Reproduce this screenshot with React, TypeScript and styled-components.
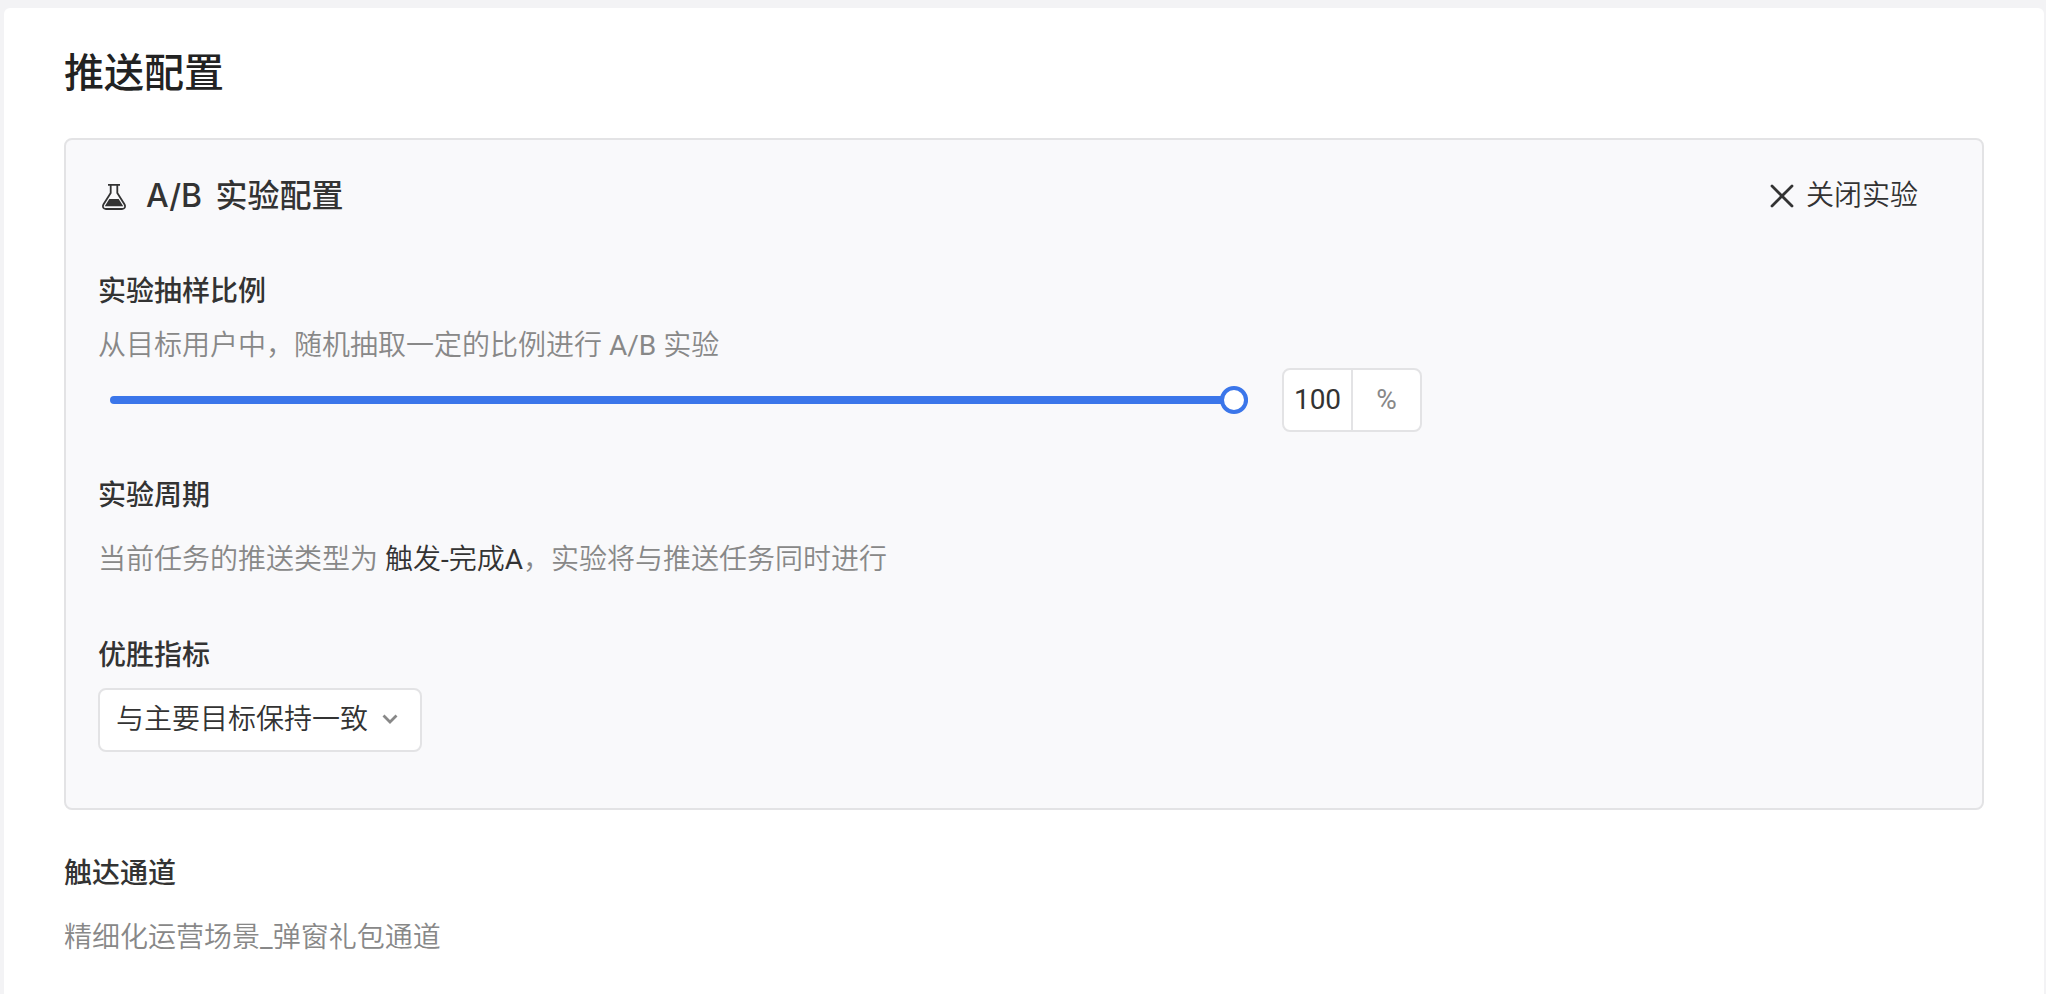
import React, { useState } from "react";
import styled, { createGlobalStyle } from "styled-components";

const GlobalStyle = createGlobalStyle`
  *, *::before, *::after { box-sizing: border-box; }
  body {
    margin: 0;
    background: #f3f3f5;
    color: #333;
    font-family: Roboto, "Noto Sans CJK SC DemiLight", "Noto Sans CJK SC", sans-serif;
    font-size: 28px;
    line-height: 40px;
  }
  button, input, select { font: inherit; color: inherit; }
`;

const Page = styled.main`
  min-height: 100vh;
  padding: 8px 2px 0 4px;
  display: flex;
`;

const Panel = styled.section`
  flex: 1;
  min-width: 0;
  background: #fff;
  border-radius: 6px 6px 0 0;
  padding: 36px 60px;
`;

const Title = styled.h1`
  margin: 0 0 34px;
  font-family: Roboto, "Noto Sans CJK SC", sans-serif;
  font-size: 40px;
  line-height: 60px;
  font-weight: 500;
  color: #222;
`;

const Card = styled.section`
  background: #f9f9fb;
  border: 2px solid #e3e3e5;
  border-radius: 8px;
  padding: 36px 32px 56px;
  margin-bottom: 44px;
`;

const CardHeader = styled.header`
  display: flex;
  align-items: center;
  justify-content: space-between;
  padding-right: 32px;
  margin-bottom: 56px;
`;

const CardTitle = styled.h2`
  display: flex;
  align-items: center;
  gap: 16px;
  margin: 0;
  font-family: Inter, "Noto Sans CJK SC", sans-serif;
  font-size: 32px;
  font-weight: 500;
`;

const TitlePrefix = styled.span`
  margin-right: 5px;
`;

const CloseButton = styled.button`
  display: flex;
  align-items: center;
  gap: 12px;
  padding: 0;
  border: 0;
  background: none;
  cursor: pointer;
`;

const Field = styled.div<{ $gap: number }>`
  margin-top: ${(p) => p.$gap}px;
`;

const labelStyle = `
  display: block;
  margin: 0;
  font-family: Roboto, "Noto Sans CJK SC", sans-serif;
  font-size: 28px;
  font-weight: 500;
`;
const Label = styled.label`${labelStyle}`;
const Heading = styled.h3`${labelStyle}`;

const Description = styled.p<{ $top: number }>`
  margin: ${(p) => p.$top}px 0 0;
  color: #888;
`;

const Highlight = styled.span`
  color: #333;
`;

const SliderRow = styled.div`
  display: flex;
  align-items: center;
  gap: 34px;
  max-width: 1324px;
  margin-top: 2px;
  padding-left: 12px;
`;

const Slider = styled.input`
  flex: 1;
  min-width: 0;
  height: 28px;
  margin: 0;
  appearance: none;
  background: none;
  cursor: pointer;

  &::-webkit-slider-runnable-track {
    height: 8px;
    border-radius: 4px;
    background: linear-gradient(#3b76ea, #3b76ea) 0 0 / var(--filled) 100% no-repeat #e3e3e5;
  }
  &::-webkit-slider-thumb {
    appearance: none;
    width: 28px;
    height: 28px;
    margin-top: -10px;
    border: 4px solid #3b76ea;
    border-radius: 50%;
    background: #fff;
  }
`;

const PercentBox = styled.div`
  display: flex;
  flex: none;
  width: 140px;
  height: 64px;
  border: 2px solid #e3e3e5;
  border-radius: 8px;
  background: #fff;
  overflow: hidden;
`;

const PercentInput = styled.input`
  width: 69px;
  padding: 0;
  border: 0;
  border-right: 2px solid #e3e3e5;
  background: none;
  text-align: center;
  outline: none;
`;

const PercentUnit = styled.span`
  flex: 1;
  text-align: center;
  line-height: 60px;
  color: #888;
`;

const SelectWrap = styled.div`
  position: relative;
  width: 324px;
  margin-top: 12px;

  svg {
    position: absolute;
    right: 24px;
    top: 24px;
    pointer-events: none;
  }
`;

const Select = styled.select`
  display: block;
  width: 100%;
  height: 64px;
  padding: 0 48px 0 16px;
  appearance: none;
  border: 2px solid #e3e3e5;
  border-radius: 8px;
  background: #fff;
  cursor: pointer;
`;

const FlaskIcon = () => (
  <svg width="32" height="32" viewBox="0 0 32 32" fill="none" aria-hidden="true">
    <path d="M10 4.800h12M12.700 5v8L5.400 24.500c-1.200 2.400-.2 4.500 2.600 4.500h16c2.800 0 3.800-2.100 2.600-4.500L19.300 13V5" stroke="#333" strokeWidth="1.800" />
    <path d="M11.300 19h9.400l4.500 7.200H6.800z" fill="#333" />
  </svg>
);

const CloseIcon = () => (
  <svg width="24" height="24" viewBox="0 0 24 24" aria-hidden="true">
    <path d="M2 2l20 20M22 2L2 22" stroke="#333" strokeWidth="2.800" strokeLinecap="round" />
  </svg>
);

const ChevronIcon = () => (
  <svg width="16" height="14" viewBox="0 0 16 14" fill="none" aria-hidden="true">
    <path d="M1.500 3.500L8 10l6.500-6.500" stroke="#888" strokeWidth="2.800" />
  </svg>
);

export default function App() {
  const [ratio, setRatio] = useState(100);
  const update = (value: string) => setRatio(Math.max(0, Math.min(100, Number(value) || 0)));

  return (
    <>
      <GlobalStyle />
      <Page>
        <Panel>
          <Title>推送配置</Title>
          <Card>
            <CardHeader>
              <CardTitle>
                <FlaskIcon />
                <span>
                  <TitlePrefix>A/B</TitlePrefix> 实验配置
                </span>
              </CardTitle>
              <CloseButton type="button">
                <CloseIcon />
                关闭实验
              </CloseButton>
            </CardHeader>
            <Field $gap={0}>
              <Label htmlFor="ratio">实验抽样比例</Label>
              <Description $top={14}>从目标用户中，随机抽取一定的比例进行 A/B 实验</Description>
              <SliderRow>
                <Slider
                  id="ratio"
                  type="range"
                  min={0}
                  max={100}
                  value={ratio}
                  onChange={(e) => update(e.target.value)}
                  style={{ "--filled": `${ratio}%` } as React.CSSProperties}
                />
                <PercentBox>
                  <PercentInput
                    type="text"
                    inputMode="numeric"
                    aria-label="实验抽样比例"
                    value={ratio}
                    onChange={(e) => update(e.target.value)}
                  />
                  <PercentUnit>%</PercentUnit>
                </PercentBox>
              </SliderRow>
            </Field>
            <Field $gap={44}>
              <Heading>实验周期</Heading>
              <Description $top={24}>
                当前任务的推送类型为 <Highlight>触发-完成A</Highlight>，实验将与推送任务同时进行
              </Description>
            </Field>
            <Field $gap={56}>
              <Label htmlFor="metric">优胜指标</Label>
              <SelectWrap>
                <Select id="metric" defaultValue="goal">
                  <option value="goal">与主要目标保持一致</option>
                </Select>
                <ChevronIcon />
              </SelectWrap>
            </Field>
          </Card>
          <Heading>触达通道</Heading>
          <Description $top={24}>精细化运营场景_弹窗礼包通道</Description>
        </Panel>
      </Page>
    </>
  );
}
